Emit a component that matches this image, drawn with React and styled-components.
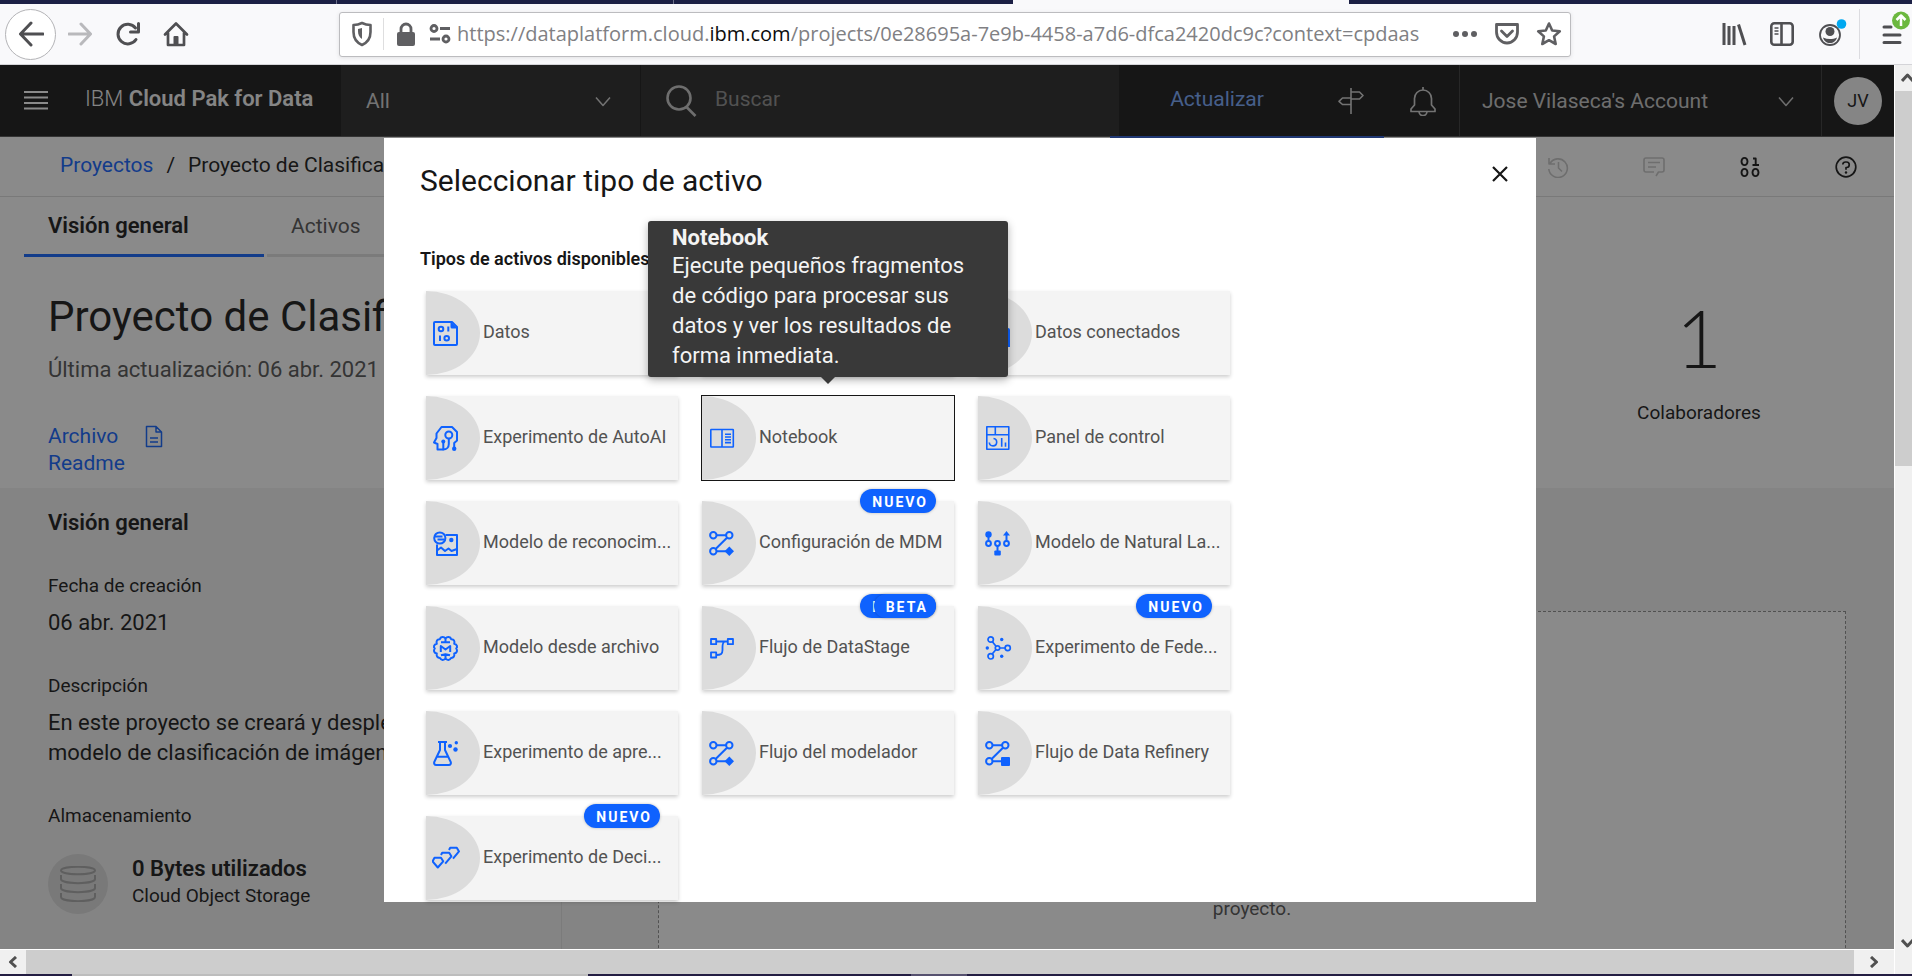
import React from 'react';
import styled, { createGlobalStyle, css } from 'styled-components';

const GlobalStyle = createGlobalStyle`
  *, *::before, *::after { box-sizing: border-box; }
  body { margin: 0; background: #ffffff; }
  body, button, input, select { font-family: Roboto, "Liberation Sans", sans-serif; }
  h1, h2, h3, p, dl, dt, dd, ul { margin: 0; padding: 0; }
  ul { list-style: none; }
  button { border: 0; padding: 0; background: none; color: inherit; cursor: pointer; }
  a { text-decoration: none; }
  svg { display: block; flex: none; }
`;

/* ---------- browser window ---------- */

const Window = styled.div`
  display: flex;
  flex-direction: column;
  height: 100vh;
  overflow: hidden;
`;

const TabStrip = styled.div`
  display: grid;
  grid-template-columns: 337fr 337fr 339fr 336fr 563fr;
  height: 4px;
  flex: none;
`;

const StripTab = styled.span`
  background: ${(p) => (p.$active ? '#f9f9fb' : '#1c2045')};
  border-right: ${(p) => (p.$line ? '1px solid #6d708a' : '0')};
`;

const Toolbar = styled.div`
  display: flex;
  align-items: center;
  flex: none;
  height: 61px;
  padding-left: 5px;
  background: #f9f9fb;
  border-bottom: 1px solid #d4d4d8;
  color: #4f4f52;
  overflow: hidden;
`;

const ToolButton = styled.button`
  display: flex;
  align-items: center;
  justify-content: center;
  width: 48px;
  height: 48px;
  color: ${(p) => (p.$faded ? '#b9b9bc' : 'inherit')};
`;

const BackButton = styled(ToolButton)`
  width: 51px;
  height: 51px;
  border: 1px solid #b4b4b7;
  border-radius: 50%;
  background: #ffffff;
`;

const AddressBar = styled.div`
  display: flex;
  align-items: center;
  flex: 1;
  height: 45px;
  margin: 0 139px;
  border: 1px solid #bcbcbf;
  border-radius: 3px;
  background: #ffffff;
  box-shadow: 0 1px 4px rgba(0, 0, 0, 0.1);
  color: #5f5f62;
`;

const AddressButton = styled.button`
  display: flex;
  align-items: center;
  justify-content: center;
  width: ${(p) => p.$width}px;
  height: 40px;
`;

const AddressRule = styled.span`
  width: 1px;
  height: 32px;
  background: #dededf;
`;

const Url = styled.div`
  flex: 1;
  min-width: 0;
  padding-left: 4px;
  overflow: hidden;
  white-space: nowrap;
  font-family: "Open Sans", "Noto Sans", sans-serif;
  font-size: 20px;
  line-height: 30px;
  color: #808083;

  b { font-weight: 400; color: #0c0c0d; }
`;

const ToolRule = styled.span`
  width: 1px;
  height: 50px;
  margin-left: 5px;
  background: #dcdce0;
`;

const MenuButton = styled(ToolButton)`
  width: 52px;
  justify-content: flex-end;
`;

const Body = styled.div`
  display: grid;
  grid-template-columns: 1fr 18px;
  grid-template-rows: 1fr 25px;
  flex: 1;
  min-height: 0;
`;

const VerticalBar = styled.div`
  display: flex;
  flex-direction: column;
  grid-row: 1 / 3;
  grid-column: 2;
  border-left: 1px solid #ffffff;
  background: #f0f0f0;
  overflow: hidden;
`;

const HorizontalBar = styled.div`
  display: flex;
  border-top: 1px solid #ffffff;
  background: #f0f0f0;
`;

const ScrollArrow = styled.span`
  display: flex;
  align-items: center;
  justify-content: ${(p) => (p.$end ? 'flex-end' : 'center')};
  flex: none;
  width: ${(p) => p.$width};
  height: ${(p) => p.$height};
  color: #505050;
`;

const ScrollThumb = styled.span`
  flex: ${(p) => p.$grow};
  background: #cdcdcd;
`;

const ScrollGap = styled.span`
  flex: ${(p) => p.$grow};
`;

const Taskbar = styled.div`
  display: grid;
  grid-template-columns: 72fr 516fr 323fr 56fr 945fr;
  flex: none;
  height: 2px;
`;

const TaskSlot = styled.span`
  background: ${(p) => p.$tone};
`;

/* ---------- web page ---------- */

const Viewport = styled.div`
  position: relative;
  overflow: hidden;
  min-width: 0;
  background: #f3f3f3;
  color: #161616;
`;

const AppHeader = styled.header`
  display: flex;
  height: 72px;
  background: #161616;
  border-bottom: 1px solid #525252;
  color: #ffffff;
  font-size: 21px;
`;

const MenuToggle = styled.button`
  display: flex;
  align-items: center;
  justify-content: center;
  width: 72px;
`;

const Brand = styled.a`
  display: flex;
  align-items: center;
  width: 269px;
  padding: 0 0 4px 13px;
  color: #f4f4f4;
  font-size: 22px;
  font-weight: 300;
  white-space: pre;

  b { font-weight: 600; }
`;

const Scope = styled.button`
  display: flex;
  align-items: center;
  justify-content: space-between;
  width: 300px;
  padding: 0 29px 0 25px;
  background: #262626;
  border-right: 1px solid #161616;
  color: #d0d0d0;
  font-size: 21px;
`;

const Search = styled.label`
  display: flex;
  align-items: center;
  flex: 1;
  gap: 18px;
  padding: 0 24px;
  background: #262626;
  color: #c6c6c6;
`;

const SearchInput = styled.input`
  flex: 1;
  min-width: 0;
  height: 40px;
  padding: 0 0 4px;
  border: 0;
  outline: 0;
  background: transparent;
  font-size: 21px;
  color: #ffffff;

  &::placeholder { color: #8d8d8d; opacity: 1; }
`;

const HeaderActions = styled.div`
  position: relative;
  display: flex;
  align-items: center;

  &::after {
    content: "";
    position: absolute;
    left: -9px;
    bottom: -2px;
    width: 274px;
    height: 2px;
    background: #2a5ad0;
  }
`;

const Upgrade = styled.a`
  width: 196px;
  padding-bottom: 4px;
  text-align: center;
  font-size: 21px;
  color: #78a9ff;
`;

const HeaderIcon = styled.button`
  display: flex;
  align-items: center;
  justify-content: center;
  width: 72px;
  height: 71px;
  color: #d0d0d0;
`;

const Account = styled.button`
  display: flex;
  align-items: center;
  justify-content: space-between;
  width: 363px;
  padding: 0 27px 0 22px;
  border: 1px solid #393939;
  border-width: 0 1px;
  font-size: 21px;
  color: #c6c6c6;
`;

const Profile = styled.button`
  display: flex;
  align-items: center;
  justify-content: center;
  width: 72px;

  span {
    display: flex;
    align-items: center;
    justify-content: center;
    width: 48px;
    height: 48px;
    border-radius: 50%;
    background: #f4f4f4;
    color: #161616;
    font-size: 18px;
  }
`;

const CrumbBar = styled.div`
  display: flex;
  align-items: center;
  height: 60px;
  padding-left: 60px;
  background: #ffffff;
  border-bottom: 1px solid #dcdcdc;
`;

const Crumbs = styled.nav`
  display: flex;
  gap: 13px;
  flex: 1;
  padding-bottom: 4px;
  font-size: 21px;
  line-height: 30px;
  white-space: nowrap;

  a { color: #0f62fe; }
`;

const CrumbAction = styled.button`
  display: flex;
  align-items: center;
  justify-content: center;
  width: 96px;
  height: 59px;
  color: ${(p) => (p.$disabled ? '#c6c6c6' : '#161616')};
`;

const Tabs = styled.div`
  display: flex;
  gap: 3px;
  padding-left: 24px;
  background: #ffffff;
`;

const Tab = styled.button`
  width: 240px;
  height: 60px;
  padding: 0 24px;
  border-bottom: 3px solid ${(p) => (p.$active ? '#0f62fe' : '#e0e0e0')};
  text-align: left;
  font-size: ${(p) => (p.$active ? 22 : 21)}px;
  font-weight: ${(p) => (p.$active ? 600 : 400)};
  color: ${(p) => (p.$active ? '#161616' : '#525252')};
`;

const Hero = styled.section`
  display: flex;
  justify-content: space-between;
  min-height: 231px;
  padding: 36px 0 0 48px;
  background: #ffffff;
`;

const HeroTitle = styled.h1`
  font-size: 42px;
  line-height: 48px;
  font-weight: 400;
  white-space: nowrap;
`;

const Updated = styled.p`
  margin: 14px 0 38px;
  font-size: 22px;
  line-height: 30px;
  color: #525252;
`;

const Readme = styled.a`
  display: flex;
  gap: 2px;
  font-size: 21px;
  line-height: 27px;
  color: #0f62fe;

  span { width: 92px; }
  svg { margin-top: 2px; }
`;

const Stat = styled.div`
  width: 390px;
  text-align: center;
`;

const StatNumber = styled.div`
  margin: -6px 0 14px;
  font-family: Lato, Roboto, sans-serif;
  font-size: 80px;
  line-height: 100px;
  font-weight: 300;
`;

const StatLabel = styled.div`
  font-size: 19px;
  line-height: 24px;
`;

const Columns = styled.div`
  display: grid;
  grid-template-columns: 562px 1fr;
  height: 100%;
`;

const Sidebar = styled.section`
  padding: 20px 48px 0;
  border-right: 1px solid #e0e0e0;
`;

const SideTitle = styled.h2`
  font-size: 22px;
  line-height: 30px;
  font-weight: 600;
`;

const Term = styled.dt`
  margin-top: 36px;
  font-size: 19px;
  line-height: 24px;
`;

const Detail = styled.dd`
  margin: 10px 0 0;
  font-size: 22px;
  line-height: 30px;
  white-space: nowrap;
`;

const Storage = styled.div`
  display: flex;
  gap: 24px;
  margin-top: 26px;

  b { display: block; font-size: 22px; line-height: 30px; font-weight: 600; }
  small { display: block; font-size: 19px; line-height: 24px; }
`;

const StorageIcon = styled.span`
  display: flex;
  align-items: center;
  justify-content: center;
  width: 60px;
  height: 60px;
  border-radius: 50%;
  background: #dcdcdc;
  color: #a8a8a8;
`;

const Main = styled.section`
  padding: 123px 48px 0 96px;
`;

const EmptyBox = styled.div`
  height: 100%;
  padding-top: 282px;
  border: 1px dashed #8d8d8d;
  background: #ffffff;
  text-align: center;
  font-size: 19px;
  line-height: 30px;
  color: #525252;
`;

/* ---------- dialog ---------- */

const Overlay = styled.div`
  position: absolute;
  inset: 0;
  display: flex;
  justify-content: center;
  align-items: flex-start;
  padding: 73px 0 0 26px;
  background: rgba(22, 22, 22, 0.5);
`;

const Dialog = styled.section`
  width: 92%;
  max-width: 1152px;
  padding: 0 0 2px 36px;
  background: #ffffff;
`;

const DialogHeader = styled.header`
  display: flex;
  justify-content: space-between;
  height: 86px;
  padding: 12px 12px 0 0;

  h2 { padding-top: 12px; font-size: 30px; line-height: 38px; font-weight: 400; }
`;

const CloseButton = styled.button`
  display: flex;
  align-items: center;
  justify-content: center;
  width: 48px;
  height: 48px;
`;

const GroupTitle = styled.h3`
  margin: 23px 0 20px;
  font-size: 18px;
  line-height: 24px;
  font-weight: 600;
`;

const TileGrid = styled.ul`
  display: grid;
  grid-template-columns: repeat(3, 252px);
  gap: 21px 24px;
  padding-left: 6px;
`;

const TileItem = styled.li`
  position: relative;
`;

const TileButton = styled.button`
  display: flex;
  align-items: center;
  width: 100%;
  height: 84px;
  background: #f4f4f4;
  box-shadow: 0 2px 4px rgba(0, 0, 0, 0.2);
  font-size: 18px;
  color: #525252;
  ${(p) => p.$focused && css`
    box-shadow: none;
    outline: 1px solid #161616;
  `}
`;

const TileIcon = styled.span`
  display: flex;
  align-items: center;
  width: 54px;
  height: 84px;
  margin-right: 3px;
  padding-left: 6px;
  border-radius: 0 100% 100% 0 / 0 50% 50% 0;
  background: #dcdcdc;
  color: #0f62fe;
`;

const TileLabel = styled.span`
  padding-bottom: 4px;
  white-space: nowrap;
`;

const Badge = styled.span`
  position: absolute;
  top: -12px;
  right: 18px;
  height: 24px;
  padding: 0 8px 0 12px;
  border-radius: 12px;
  background: #0f62fe;
  box-shadow: 0 0 3px rgba(0, 0, 0, 0.25);
  color: #ffffff;
  font-size: 14px;
  line-height: 26px;
  font-weight: 700;
  letter-spacing: 2px;
`;

const Tooltip = styled.div`
  position: absolute;
  z-index: 2;
  left: 50%;
  bottom: calc(100% + 19px);
  width: 360px;
  margin-left: -180px;
  padding: 4px 24px 6px;
  border-radius: 3px;
  background: #393939;
  box-shadow: 0 3px 9px rgba(0, 0, 0, 0.3);
  color: #f4f4f4;
  font-size: 22px;
  line-height: 30px;

  b { display: block; line-height: 26px; font-weight: 700; }

  &::after {
    content: "";
    position: absolute;
    top: 100%;
    left: 50%;
    margin-left: -7px;
    border: 7px solid transparent;
    border-top-color: #393939;
    border-bottom: 0;
  }
`;

/* ---------- drawings ---------- */

const Icon = ({ w = 24, h, box, sw = 2, children }) => (
  <svg width={w} height={h || w} viewBox={box || `0 0 ${w} ${h || w}`} fill="none" stroke="currentColor"
    strokeWidth={sw} strokeLinejoin="round" aria-hidden="true">{children}</svg>
);

const dot = { fill: 'currentColor', stroke: 'none' };
const Chevron = () => <Icon w={16} sw={1.5}><path d="M1 4.5l7 8 7-8" /></Icon>;

const links = <path d="M8.5 6.3h9.6M19 8.8L7.6 20M8.5 22.3H18" />;
const nodes = (
  <>
    {links}
    <circle cx="5.3" cy="6.3" r="3.2" /><circle cx="21.3" cy="6.3" r="3.2" /><circle cx="5.3" cy="22.3" r="3.2" />
  </>
);
const flow = <>{nodes}<path {...dot} d="M21.3 17.5l4.7 4.8-4.7 4.8-4.7-4.8z" /></>;

const glyphs = {
  data: (
    <>
      <path d="M3 3h17l5 5v17a1 1 0 0 1-1 1H3a1 1 0 0 1-1-1V4a1 1 0 0 1 1-1z" />
      <path {...dot} d="M18.5 2.5L25.5 9.5H20a1.5 1.5 0 0 1-1.5-1.5z" />
      <circle cx="9" cy="10" r="2.3" /><circle cx="14.7" cy="19.3" r="2.3" />
      <path d="M16.3 7.5v5M8 16.5v5.5" />
    </>
  ),
  connected: (
    <>
      <rect x="2" y="10" width="23" height="19" rx="1" /><path d="M22 10v18M6 15h10M6 21h10" />
    </>
  ),
  autoai: (
    <>
      <path d="M11.5 25.5H5.5V20L2 18.5 4.5 14V9.5L9.5 3H20l5 5v8.5l-2.8 2.5v5" />
      <circle cx="16.8" cy="11" r="3.5" />
      <path d="M16.8 14.5V20c0 3-2 5.5-5.5 5.5V17" />
      <circle {...dot} cx="11.3" cy="17.5" r="2" /><circle {...dot} cx="22.2" cy="24.8" r="2.2" />
    </>
  ),
  notebook: (
    <g strokeWidth="1.6">
      <rect x="2.8" y="5.5" width="22.5" height="17.5" rx="0.5" />
      <path d="M14 5.500V23M17 10.2h6M17 13h6M17 15.8h6M17 18.6h6" />
    </g>
  ),
  dashboard: (
    <g strokeWidth="1.6">
      <rect x="2.8" y="2.8" width="22" height="22.5" /><path d="M2.8 10.7h22M11.3 3v7.7" />
      <path d="M9.5 14.5a3.7 3.7 0 1 1-4.2 4M17.7 14v8.8M21.5 18.5v4.3" />
    </g>
  ),
  vision: (
    <>
      <path d="M13.5 6H25v20H5V15.500" /><path d="M5 21.5l4-3 4 3.5 3.5-2.5 3 2.500L25 20" />
      <circle cx="7.8" cy="9" r="5.6" /><path d="M3 7.5h7.5M5.5 10.5h7" strokeWidth="1.8" />
      <circle {...dot} cx="19.3" cy="11" r="2.2" />
    </>
  ),
  language: (
    <>
      <circle cx="4.5" cy="14.5" r="2.4" /><circle cx="13.5" cy="14.5" r="2.4" /><circle cx="22.5" cy="14.5" r="2.4" />
      <path d="M4.5 12V6M13.5 17v6M22.5 12V5" />
      <circle {...dot} cx="4.5" cy="5.5" r="3.2" /><path {...dot} d="M22.5 2l3.5 4.5h-7z" />
      <rect {...dot} x="10.3" y="21.5" width="6.5" height="5" rx="1" />
    </>
  ),
  brain: (
    <>
      <path d="M13.5 4.5C12 2.5 8.5 2.5 7.8 5.2 5 5 4 7.5 4.8 9.8 1.8 10.5 1.2 13 2.8 14.5 1.2 16.5 2 19 4.8 19.4 4 22 5.5 24 7.9 23.9 9 26.5 12 26.4 13.5 24.5 15 26.4 18 26.5 19.1 23.9 21.5 24 23 22 22.2 19.4 25 19 25.8 16.5 24.2 14.5 25.8 13 25.2 10.5 22.2 9.8 23 7.5 22 5 19.2 5.2 18.5 2.5 15 2.5 13.5 4.5z" />
      <path d="M8.8 18v-6l4.7 3.5 4.7-3.5v6M13.5 4.5V8M9 8.3h9M13.5 24.5V21M9 21.3l4.5-1 4.5 1" />
    </>
  ),
  stage: (
    <g strokeWidth="1.8">
      <rect x="3" y="5" width="5.2" height="5.2" /><rect x="19.8" y="5" width="5.2" height="5.2" />
      <rect x="3" y="18.3" width="5.2" height="5.2" />
      <path d="M8 7.5h12M8 21c5 0 6.5-1 6.5-5v-3c0-3 .5-5 2.5-5.5" />
    </g>
  ),
  federated: (
    <g strokeWidth="1.7">
      <path d="M8.2 7.5l3.8 4.7M8.2 20l3.8-4.5M15.5 14H21" />
      <circle cx="6.7" cy="5.5" r="2.7" /><circle cx="13.5" cy="14" r="2.2" />
      <circle cx="23.7" cy="14" r="2.6" /><circle cx="6.7" cy="22.3" r="2.7" />
      <circle {...dot} cx="17.7" cy="5.5" r="1.7" /><circle {...dot} cx="17.7" cy="22.3" r="1.7" />
      <circle {...dot} cx="3.3" cy="14" r="1.7" />
    </g>
  ),
  flask: (
    <>
      <path d="M6 3h9M8 3v8L2.5 22.5C1.5 24.5 2.5 26 4.2 26h12.6c1.7 0 2.7-1.5 1.7-3.5L13 11V3M5 17.7h11" />
      <circle {...dot} cx="18" cy="7" r="2.1" /><circle {...dot} cx="24.3" cy="3.8" r="1.7" />
      <circle {...dot} cx="23.5" cy="10.5" r="2.2" />
    </>
  ),
  flow,
  refinery: <>{nodes}<rect {...dot} x="17" y="18" width="9" height="9" rx="1" /></>,
  decision: (
    <g strokeWidth="2">
      <path d="M2.500 13.700h6.500l2.200 3.600-5.400 6.200-5.200-6.200z" />
      <path d="M9 11l1.200-2.300h7l2.200 3.600-6.200 7.400" />
      <path d="M17 6l1.200-2.200h6.600l2.200 3.600-6 7.200" />
    </g>
  ),
};

const tiles = [
  { label: 'Datos', glyph: 'data' },
  { name: 'Conexión', glyph: 'connected' },
  { label: 'Datos conectados', glyph: 'connected' },
  { label: 'Experimento de AutoAI', glyph: 'autoai' },
  { label: 'Notebook', glyph: 'notebook', focused: true },
  { label: 'Panel de control', glyph: 'dashboard' },
  { label: 'Modelo de reconocim...', glyph: 'vision' },
  { label: 'Configuración de MDM', glyph: 'flow', badges: ['NUEVO'] },
  { label: 'Modelo de Natural La...', glyph: 'language' },
  { label: 'Modelo desde archivo', glyph: 'brain' },
  { label: 'Flujo de DataStage', glyph: 'stage', badges: ['NUEVO', 'BETA'] },
  { label: 'Experimento de Fede...', glyph: 'federated', badges: ['NUEVO'] },
  { label: 'Experimento de apre...', glyph: 'flask' },
  { label: 'Flujo del modelador', glyph: 'flow' },
  { label: 'Flujo de Data Refinery', glyph: 'refinery' },
  { label: 'Experimento de Deci...', glyph: 'decision', badges: ['NUEVO'] },
];

function Tile({ label, name, glyph, focused, badges = [] }) {
  return (
    <TileItem>
      <TileButton type="button" $focused={focused} aria-label={name} aria-describedby={focused ? 'tile-tip' : undefined}>
        <TileIcon><Icon w={28}>{glyphs[glyph]}</Icon></TileIcon>
        <TileLabel>{label}</TileLabel>
      </TileButton>
      {badges.map((text) => <Badge key={text}>{text}</Badge>)}
      {focused && (
        <Tooltip role="tooltip" id="tile-tip">
          <b>Notebook</b>
          Ejecute pequeños fragmentos de código para procesar sus datos y ver los resultados de forma inmediata.
        </Tooltip>
      )}
    </TileItem>
  );
}

function BrowserToolbar() {
  return (
    <Toolbar>
      <BackButton aria-label="Atrás"><Icon w={26} sw={3}><path d="M25 13H3M13 2L2.5 13 13 24" strokeLinecap="round" /></Icon></BackButton>
      <ToolButton $faded aria-label="Adelante"><Icon w={24} sw={3}><path d="M1 12h21M13 2l9.5 10L13 22" strokeLinecap="round" /></Icon></ToolButton>
      <ToolButton aria-label="Recargar"><Icon w={26} sw={3}><path d="M21 18.500A9.800 9.800 0 1 1 20.500 7" strokeLinecap="round" /><path d="M23.500 2.500v8.500H15.500" strokeLinecap="round" /></Icon></ToolButton>
      <ToolButton aria-label="Inicio"><Icon w={26} sw={2.7}><path d="M2 13.5L13 2.5l11 11M5 12v12h16V12" strokeLinecap="round" /><path {...dot} d="M10.5 23v-7a1 1 0 0 1 1-1h3a1 1 0 0 1 1 1v7z" /></Icon></ToolButton>
      <AddressBar>
        <AddressButton $width={43} aria-label="Protección"><Icon w={22} h={26} sw={2.6}><path d="M11 2c3 1.5 5.5 2 8.5 2v7c0 6-3 10.5-8.5 13C5.5 21.500 2.5 17 2.5 11V4c3 0 5.500-.5 8.5-2z" /><path d="M11 7v11c-3-2-4-4.5-4-8V8z" {...dot} /></Icon></AddressButton>
        <AddressRule />
        <AddressButton $width={43} aria-label="Conexión segura"><Icon w={20} h={26} sw={2.8}><path d="M5 12V8a5 5 0 0 1 10 0v4" /><rect {...dot} x="1" y="11" width="18" height="14" rx="2" /></Icon></AddressButton>
        <AddressButton $width={26} aria-label="Permisos"><Icon w={22} h={20} sw={2.8}><circle cx="5" cy="4.500" r="3" /><circle cx="17" cy="15" r="3" /><path d="M11 4.500h10M1 15h10" /></Icon></AddressButton>
        <Url>https://dataplatform.cloud.<b>ibm.com</b>/projects/0e28695a-7e9b-4458-a7d6-dfca2420dc9c?context=cpdaas</Url>
        <AddressButton $width={42} aria-label="Más acciones"><Icon w={24} h={8}><circle {...dot} cx="3" cy="4" r="3" /><circle {...dot} cx="12" cy="4" r="3" /><circle {...dot} cx="21" cy="4" r="3" /></Icon></AddressButton>
        <AddressButton $width={42} aria-label="Pocket"><Icon w={26} h={24} sw={2.8}><path d="M2.5 2.5h21v7.5a10.5 11 0 0 1-21 0z" /><path d="M7.5 9l5.5 5.500L18.5 9" strokeLinecap="round" /></Icon></AddressButton>
        <AddressButton $width={42} aria-label="Marcador"><Icon w={26} sw={2.6}><path d="M13 2.5l3.2 7 7.6.8-5.7 5.1 1.6 7.6L13 19.2 6.3 23l1.6-7.6-5.7-5.1 7.6-.8z" /></Icon></AddressButton>
      </AddressBar>
      <ToolButton aria-label="Biblioteca"><Icon w={26} sw={3}><path d="M3 2v22M8 5v19M13 5v19" /><path d="M17.5 3.500L24 24" /></Icon></ToolButton>
      <ToolButton aria-label="Barra lateral"><Icon w={26} sw={2.6}><rect x="2.3" y="2.3" width="21.4" height="21.4" rx="3" /><path d="M12.5 2v22" /><path d="M5.5 7h4M5.5 10h4M5.5 13h4" strokeWidth="1.5" /></Icon></ToolButton>
      <ToolButton aria-label="Cuenta">
        <Icon w={34} h={36} sw={1.8}>
          <circle cx="17" cy="19" r="10" /><circle {...dot} cx="17" cy="15.5" r="4.5" />
          <path {...dot} d="M10 21.5c4.5 2 9.5 2 14 0-.8 3.5-3.5 5.5-7 5.5s-6.2-2-7-5.5z" />
          <circle cx="28.500" cy="8" r="4.8" fill="#00a8f0" stroke="none" />
        </Icon>
      </ToolButton>
      <ToolRule />
      <MenuButton aria-label="Menú">
        <Icon w={30} h={48} sw={3}>
          <path d="M2 17h7M2 25h16M2 32.5h16" strokeLinecap="round" />
          <circle cx="19" cy="10.5" r="9" fill="#6cb83f" stroke="none" />
          <path d="M19 16V6M14.5 10L19 5.5l4.5 4.5" stroke="#ffffff" strokeWidth="2.5" />
        </Icon>
      </MenuButton>
    </Toolbar>
  );
}

function PageHeader() {
  return (
    <AppHeader>
      <MenuToggle aria-label="Menú de navegación"><Icon w={24} sw={2}><path d="M0 3h24M0 8.500h24M0 14h24M0 19.500h24" /></Icon></MenuToggle>
      <Brand href="#">IBM <b>Cloud Pak for Data</b></Brand>
      <Scope type="button">All <Chevron /></Scope>
      <Search>
        <Icon w={32} sw={2.6}><circle cx="14" cy="13" r="11.5" /><path d="M21.5 22l9 9" /></Icon>
        <SearchInput type="text" placeholder="Buscar" aria-label="Buscar" />
      </Search>
      <HeaderActions>
        <Upgrade href="#">Actualizar</Upgrade>
        <HeaderIcon aria-label="Visitas guiadas"><Icon w={26} sw={1.6}><path d="M13 0v26M13 4h8.5l3.5 3.5-3.5 3.5H13M13 10H4.500L1 13.300l3.500 3.200H13" /></Icon></HeaderIcon>
        <HeaderIcon aria-label="Notificaciones"><Icon w={28} h={30} sw={1.7}><path d="M14 1v3M14 4a8.5 8.5 0 0 0-8.5 8.500V19L2 23v2.5h24V23l-3.5-4v-6.500A8.5 8.5 0 0 0 14 4zM10 25.5a4 4 0 0 0 8 0" /></Icon></HeaderIcon>
      </HeaderActions>
      <Account type="button">Jose Vilaseca's Account <Chevron /></Account>
      <Profile aria-label="Perfil"><span>JV</span></Profile>
    </AppHeader>
  );
}

function ProjectPage() {
  return (
    <>
      <PageHeader />
      <CrumbBar>
        <Crumbs><a href="#">Proyectos</a><span>/</span><span>Proyecto de Clasificación</span></Crumbs>
        <CrumbAction $disabled aria-label="Historial"><Icon w={22} sw={1.6}><path d="M2 2v6h6M3 7.5a9.3 9.3 0 1 1-1.2 5.5M11.5 6v6l3.5 3.5" /></Icon></CrumbAction>
        <CrumbAction $disabled aria-label="Comentarios"><Icon w={22} sw={1.6}><path d="M13 20l2.5-4H19a2 2 0 0 0 2-2V4a2 2 0 0 0-2-2H3a2 2 0 0 0-2 2v10a2 2 0 0 0 2 2h8M5 6.5h12M5 11h8" /></Icon></CrumbAction>
        <CrumbAction aria-label="Datos"><Icon w={22} sw={1.9}><ellipse cx="5.5" cy="5.5" rx="3" ry="3.600" /><ellipse cx="5.5" cy="16.5" rx="3" ry="3.600" /><ellipse cx="16.5" cy="16.5" rx="3" ry="3.600" /><path d="M14 2.5h2.700V9M13.5 9h6.500" /></Icon></CrumbAction>
        <CrumbAction aria-label="Ayuda"><Icon w={22} sw={1.7}><circle cx="11" cy="11" r="9.8" /><path d="M7.8 8.500A2.7 2.7 0 0 1 10.5 6h1a2.7 2.7 0 0 1 0 5.500H11v2.3" /><circle {...dot} cx="11" cy="16.5" r="1.2" /></Icon></CrumbAction>
      </CrumbBar>
      <Tabs role="tablist">
        <Tab role="tab" $active aria-selected="true">Visión general</Tab>
        <Tab role="tab">Activos</Tab>
      </Tabs>
      <Hero>
        <div>
          <HeroTitle>Proyecto de Clasificación</HeroTitle>
          <Updated>Última actualización: 06 abr. 2021</Updated>
          <Readme href="#">
            <span>Archivo Readme</span>
            <Icon w={24} sw={1.5}><path d="M4.5 1.5h9.5l5.5 5.5v14.500h-15zM14 1.500V7h5.5M8 13h8M8 17h8" /></Icon>
          </Readme>
        </div>
        <Stat><StatNumber>1</StatNumber><StatLabel>Colaboradores</StatLabel></Stat>
      </Hero>
      <Columns>
        <Sidebar>
          <SideTitle>Visión general</SideTitle>
          <dl>
            <Term>Fecha de creación</Term>
            <Detail>06 abr. 2021</Detail>
            <Term>Descripción</Term>
            <Detail>En este proyecto se creará y desplegará<br />modelo de clasificación de imágenes</Detail>
            <Term>Almacenamiento</Term>
          </dl>
          <Storage>
            <StorageIcon>
              <Icon w={36} sw={2}><ellipse cx="18" cy="4.500" rx="17" ry="3.7" /><path d="M1 9v4c0 5.5 34 5.5 34 0V9M1 18v4c0 5.5 34 5.5 34 0v-4M1 27v4c0 5.5 34 5.5 34 0v-4" /></Icon>
            </StorageIcon>
            <div><b>0 Bytes utilizados</b><small>Cloud Object Storage</small></div>
          </Storage>
        </Sidebar>
        <Main><EmptyBox>proyecto.</EmptyBox></Main>
      </Columns>
    </>
  );
}

function AssetDialog() {
  return (
    <Overlay>
      <Dialog role="dialog" aria-labelledby="asset-title">
        <DialogHeader>
          <h2 id="asset-title">Seleccionar tipo de activo</h2>
          <CloseButton aria-label="Cerrar"><Icon w={16} sw={2.2}><path d="M1 1l14 14M15 1L1 15" /></Icon></CloseButton>
        </DialogHeader>
        <GroupTitle>Tipos de activos disponibles</GroupTitle>
        <TileGrid>{tiles.map((t) => <Tile key={t.label || t.name} {...t} />)}</TileGrid>
      </Dialog>
    </Overlay>
  );
}

export default function App() {
  return (
    <Window>
      <GlobalStyle />
      <TabStrip><StripTab $line /><StripTab $line /><StripTab /><StripTab $active /><StripTab /></TabStrip>
      <BrowserToolbar />
      <Body>
        <Viewport>
          <ProjectPage />
          <AssetDialog />
        </Viewport>
        <VerticalBar>
          <ScrollArrow $width="100%" $height="26px" $end><Icon w={11} h={10} sw={3}><path d="M1 8l5.5-6L12 8" /></Icon></ScrollArrow>
          <ScrollThumb $grow={375} />
          <ScrollGap $grow={457} />
          <ScrollArrow $width="100%" $height="50px" $end><Icon w={11} h={30} sw={3}><path d="M1 6l5.5 6L12 6" /></Icon></ScrollArrow>
        </VerticalBar>
        <HorizontalBar>
          <ScrollArrow $width="26px" $height="24px"><Icon w={10} h={12} sw={3}><path d="M8 1L2.5 6 8 11" /></Icon></ScrollArrow>
          <ScrollThumb $grow={1} />
          <ScrollArrow $width="40px" $height="24px"><Icon w={10} h={12} sw={3}><path d="M2 1l5.5 5L2 11" /></Icon></ScrollArrow>
        </HorizontalBar>
      </Body>
      <Taskbar>
        <TaskSlot $tone="#231d42" /><TaskSlot $tone="#bdbdbd" /><TaskSlot $tone="#231d42" /><TaskSlot $tone="#56516f" /><TaskSlot $tone="#231d42" />
      </Taskbar>
    </Window>
  );
}
